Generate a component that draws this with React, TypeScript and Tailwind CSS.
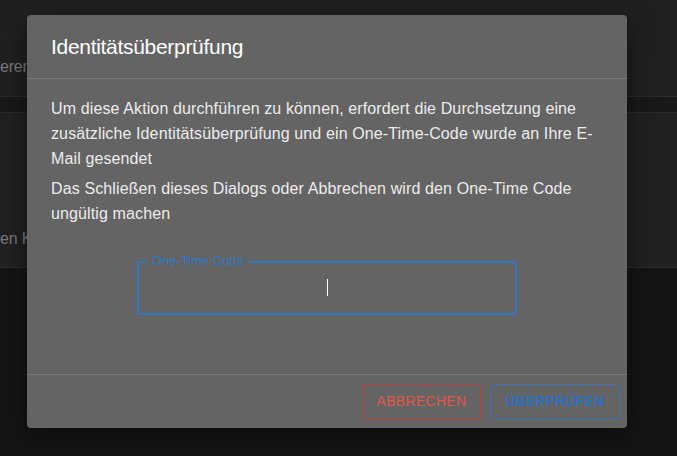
import React from 'react';

const App: React.FC = () => {
    return (
        <div className="relative w-[677px] h-[456px] overflow-hidden bg-[#151515] font-['Liberation_Sans',Arial,sans-serif]">
            {/* page behind the dialog */}
            <div className="flex flex-col">
                <div className="h-[96px] bg-[#202020] flex items-end pb-[17px]">
                    <span className="text-[16px] text-[#7c7c7c] tracking-[-0.2px]">eren</span>
                </div>
                <div className="h-[17px] bg-[#191919] border-y border-[#2c2c2c]" />
                <div className="h-[155px] bg-[#212121] border-b border-[#2e2e2e] flex items-end pb-[16px]">
                    <span className="text-[16px] text-[#7c7c7c] tracking-[-0.2px]">en Kl</span>
                </div>
                <div className="flex-1 bg-[#151515]" />
            </div>

            {/* dialog */}
            <div className="absolute left-[27px] top-[15px] w-[600px] h-[413px] bg-[#646464] rounded-[4px] shadow-[0_8px_30px_rgba(0,0,0,0.5)] flex flex-col">
                <div className="h-[64px] px-[24px] flex items-center border-b border-[#7b7b7b]">
                    <h2 className="text-[21px] text-white tracking-[-0.3px] pt-[1px]">Identitätsüberprüfung</h2>
                </div>
                <div className="flex-1 px-[24px] pt-[17px] text-[16px] leading-[25px] tracking-[0.12px] text-[#ececec]">
                    <p>Um diese Aktion durchführen zu können, erfordert die Durchsetzung eine zusätzliche Identitätsüberprüfung und ein One-Time-Code wurde an Ihre E-Mail gesendet</p>
                    <p className="mt-[5px]">Das Schließen dieses Dialogs oder Abbrechen wird den One-Time Code ungültig machen</p>
                    <div className="flex justify-center mt-[35px]">
                        <div className="relative w-[380px] h-[54px] border-2 border-[#2f78c4] rounded-[4px] flex items-center justify-center">
                            <span className="absolute -top-[10px] left-[8px] px-[5px] bg-[#646464] text-[13px] leading-[16px] tracking-normal text-[#2f78c4]">One-Time Code</span>
                            <span className="w-[1px] h-[17px] bg-white -mt-[2px]" />
                        </div>
                    </div>
                </div>
                <div className="h-[54px] border-t border-[#7b7b7b] flex items-center justify-end gap-[9px] px-[7px]">
                    <button className="h-[36px] w-[119px] border border-[#b8463f] rounded-[3px] text-[14px] text-[#e0574c] tracking-[0.3px]">ABBRECHEN</button>
                    <button className="h-[36px] w-[130px] border border-[#3a74b8] rounded-[5px] text-[14px] font-bold text-[#2f70bc] tracking-[0.2px]">ÜBERPRÜFEN</button>
                </div>
            </div>
        </div>
    );
};

export default App;
